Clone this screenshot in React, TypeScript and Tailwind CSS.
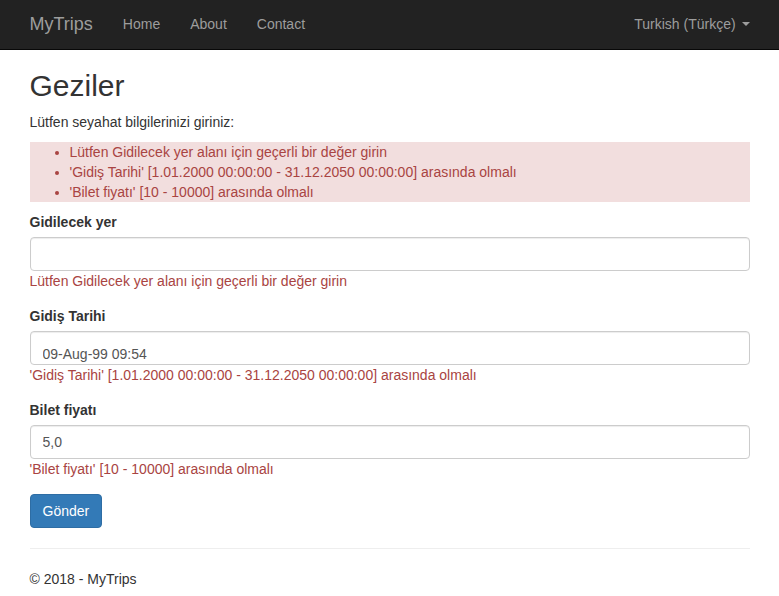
import React from "react";

const errors = [
  "Lütfen Gidilecek yer alanı için geçerli bir değer girin",
  "'Gidiş Tarihi' [1.01.2000 00:00:00 - 31.12.2050 00:00:00] arasında olmalı",
  "'Bilet fiyatı' [10 - 10000] arasında olmalı",
];

const inputCls =
  "block h-[34px] w-full rounded-[4px] border border-[#ccc] bg-white px-3 text-[14px] leading-5 text-[#555] shadow-[inset_0_1px_1px_rgba(0,0,0,0.075)] outline-none";

const Field = ({
  label,
  value,
  error,
  shifted,
}: {
  label: string;
  value: string;
  error: string;
  shifted?: boolean;
}) => (
  <div className="mb-[15px]">
    <label className="mb-[5px] block text-[14px] font-bold leading-5">{label}</label>
    <input
      readOnly
      value={value}
      className={shifted ? inputCls + " pt-[11px] pb-0" : inputCls + " py-[6px]"}
    />
    <span className="block text-[14px] leading-5 text-[#a94442]">{error}</span>
  </div>
);

export default function App() {
  return (
    <div className="min-h-[596px] bg-white font-['Liberation_Sans',Arial,sans-serif] text-[14px] leading-5 text-[#333]">
      <nav className="h-[50px] border-b border-[#080808] bg-[#222]">
        <div className="mx-auto flex h-full w-[750px] items-start px-[15px]">
          <a className="-ml-[15px] block pt-[14px] px-[15px] text-[18px] leading-5 text-[#9d9d9d]">MyTrips</a>
          <ul className="flex">
            {["Home", "About", "Contact"].map((l) => (
              <li key={l}>
                <a className="block px-[15px] pt-[14px] leading-5 text-[#9d9d9d]">{l}</a>
              </li>
            ))}
          </ul>
          <a className="-mr-[15px] ml-auto flex items-center px-[15px] pt-[14px] leading-5 text-[#9d9d9d]">
            Turkish (Türkçe)&nbsp;
            <span className="ml-[2px] inline-block h-0 w-0 border-x-4 border-t-4 border-x-transparent border-t-[#9d9d9d]" />
          </a>
        </div>
      </nav>

      <div className="mx-auto w-[750px] px-[15px]">
        <h2 className="mt-[19px] mb-[10px] text-[30px] font-medium leading-[1.1]">Geziler</h2>
        <p className="mb-[10px]">Lütfen seyahat bilgilerinizi giriniz:</p>

        <div className="mb-[10px] bg-[#f2dede] text-[#a94442]">
          <ul className="list-disc pl-10">
            {errors.map((e) => (
              <li key={e}>{e}</li>
            ))}
          </ul>
        </div>

        <Field label="Gidilecek yer" value="" error={errors[0]} />
        <Field label="Gidiş Tarihi" value="09-Aug-99 09:54" error={errors[1]} shifted />
        <Field label="Bilet fiyatı" value="5,0" error={errors[2]} />

        <button className="h-[34px] rounded-[4px] border border-[#2e6da4] bg-[#337ab7] px-3 text-[14px] leading-5 text-white">
          Gönder
        </button>

        <hr className="mt-5 mb-5 border-t border-[#eee]" />
        <footer>
          <p>© 2018 - MyTrips</p>
        </footer>
      </div>
    </div>
  );
}
